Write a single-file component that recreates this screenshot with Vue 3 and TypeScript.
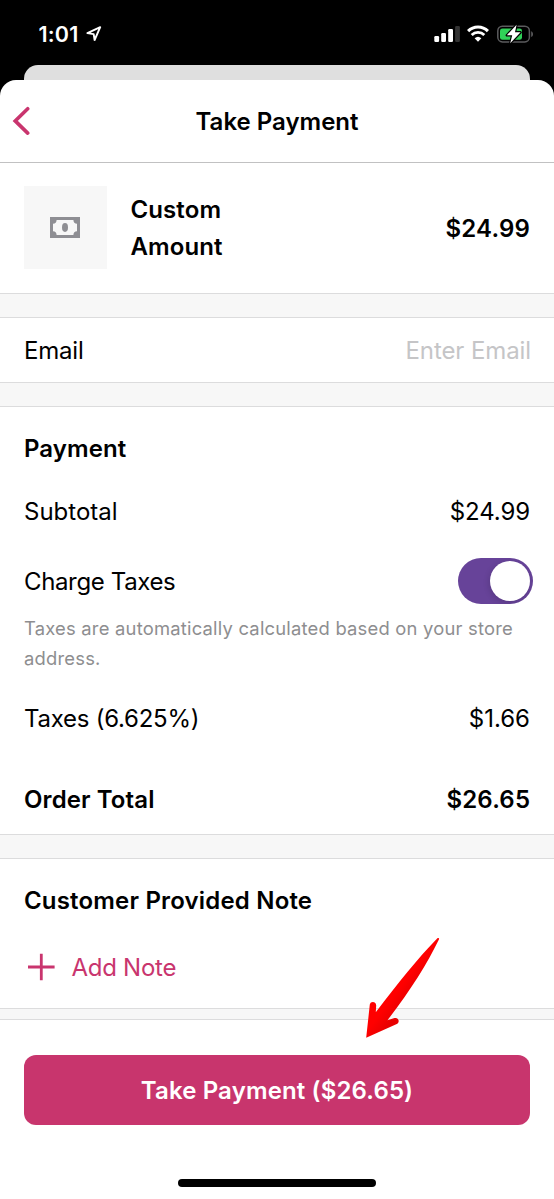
<script setup lang="ts">
import { ref } from 'vue'

const productPrice = '$24.99'
const subtotal = '$24.99'
const taxAmount = '$1.66'
const total = '$26.65'
const email = ref('')
const chargeTaxes = ref(true)
</script>

<template>
  <div class="screen">
    <div class="status">
      <div class="clock">
        <span class="time">1:01</span>
        <svg class="location" width="16" height="16" viewBox="0 0 16 16">
          <path d="M1.4 7.1 14.2 1.2 8.6 14 7.7 8.1Z" fill="none" stroke="#fff" stroke-width="1.9" stroke-linejoin="round" />
        </svg>
      </div>
      <div class="indicators">
        <svg class="signal" width="27" height="18" viewBox="0 0 27 18">
          <rect x="0.3" y="11" width="4.8" height="5.9" rx="1.2" fill="#fff" />
          <rect x="7.2" y="8" width="4.8" height="8.9" rx="1.2" fill="#fff" />
          <rect x="14.2" y="4.1" width="4.8" height="12.8" rx="1.2" fill="#fff" />
          <rect x="21.1" y="1" width="4.8" height="15.9" rx="1.2" fill="#333" />
        </svg>
        <svg class="wifi" width="22" height="17" viewBox="0 0 22 17">
          <path d="M1.1 6.1A14 14 0 0 1 20.9 6.1" fill="none" stroke="#fff" stroke-width="3.1" />
          <path d="M4.7 9.9A8.9 8.9 0 0 1 17.3 9.9" fill="none" stroke="#fff" stroke-width="2.8" />
          <path d="M11 16.7 7.6 13.3A5 5 0 0 1 14.4 13.3Z" fill="#fff" />
        </svg>
        <svg class="battery" width="37" height="20" viewBox="0 0 37 20">
          <rect x="0.8" y="2.3" width="31.6" height="15.6" rx="4.6" fill="none" stroke="#5b5b5d" stroke-width="1.5" />
          <path d="M34.2 7.2C36.6 8 36.6 12.2 34.2 13Z" fill="#5b5b5d" />
          <rect x="3" y="4.4" width="22" height="11.4" rx="2.4" fill="#30d158" />
          <path d="M19.6.8 9.8 11.3H15.2L13.2 19.2 23.6 8.3H18Z" fill="#fff" stroke="#000" stroke-width="2.4" stroke-linejoin="round" paint-order="stroke" />
        </svg>
      </div>
    </div>
    <div class="back-sheet"></div>
    <main class="sheet">
      <header class="nav">
        <button class="back" aria-label="Back">
          <svg width="18" height="30" viewBox="0 0 18 30">
            <path d="M15.7 2.7 3.2 14.9 15.7 27.1" fill="none" stroke="#c9356e" stroke-width="3.6" stroke-linecap="round" stroke-linejoin="miter" />
          </svg>
        </button>
        <h1 class="title">Take Payment</h1>
      </header>

      <section class="product">
        <div class="thumb">
          <svg width="30" height="21" viewBox="0 0 30 21">
            <rect width="30" height="21" fill="#8e8e93" />
            <path d="M6.6 3H23.4A3.8 3.8 0 0 0 27 6.7V14.3A3.8 3.8 0 0 0 23.4 18H6.6A3.8 3.8 0 0 0 3 14.3V6.7A3.8 3.8 0 0 0 6.6 3Z" fill="#f7f7f7" />
            <ellipse cx="15" cy="10.5" rx="3" ry="4.4" fill="#8e8e93" />
          </svg>
        </div>
        <h2 class="product-name">Custom<br />Amount</h2>
        <span class="value strong">{{ productPrice }}</span>
      </section>

      <div class="gap"></div>

      <section class="email">
        <label class="t-email" for="email">Email</label>
        <input id="email" v-model="email" class="field" type="text" placeholder="Enter Email" />
      </section>

      <div class="gap"></div>

      <section class="payment">
        <div class="row heading"><h2 class="t-payment">Payment</h2></div>
        <div class="row subtotal"><span>Subtotal</span><span class="value">{{ subtotal }}</span></div>
        <div class="row charge">
          <span class="t-charge">Charge Taxes</span>
          <button class="toggle" role="switch" aria-label="Charge Taxes" :aria-checked="chargeTaxes" @click="chargeTaxes = !chargeTaxes">
            <span class="knob"></span>
          </button>
        </div>
        <p class="hint">Taxes are automatically calculated based on your store address.</p>
        <div class="row taxes"><span class="t-taxes">Taxes (6.625%)</span><span class="value">{{ taxAmount }}</span></div>
        <div class="row total"><h2 class="t-total">Order Total</h2><span class="value strong">{{ total }}</span></div>
      </section>

      <div class="gap"></div>

      <section class="note">
        <h2 class="t-note">Customer Provided Note</h2>
        <button class="add">
          <svg width="28" height="28" viewBox="0 0 28 28">
            <path d="M14.3 .8V27.2M1 14H27.6" stroke="#c9356e" stroke-width="2.8" fill="none" />
          </svg>
          <span class="t-add">Add Note</span>
        </button>
      </section>

      <div class="gap thin"></div>

      <footer class="footer">
        <button class="pay">Take Payment ({{ total }})</button>
        <div class="home"></div>
      </footer>
    </main>

    <svg class="arrow" width="80" height="106" viewBox="0 0 80 106">
      <defs>
        <linearGradient id="arrowFill" gradientUnits="userSpaceOnUse" x1="28" y1="58" x2="44" y2="70">
          <stop offset="0.3" stop-color="#ff0000" />
          <stop offset="1" stop-color="#e80000" />
        </linearGradient>
      </defs>
      <path d="M77.4 3.2C78.6 2.4 79.6 3.2 78.9 4.4C67 29 50 56 27.5 85.2L34.5 83.1C38.8 82.2 40.2 87.3 36.8 89.1L6.2 102.8 9.8 69.6C10.5 66.1 15.8 66.3 16.2 70.2L15.8 77.3C38 48 58 23 77.4 3.2Z" fill="url(#arrowFill)" />
    </svg>
  </div>
</template>

<style>
html,
body {
  margin: 0;
  background: #000;
}
</style>

<style scoped>
.screen {
  position: relative;
  display: flex;
  flex-direction: column;
  width: 554px;
  height: 1199px;
  overflow: hidden;
  background: #000;
  color: #000;
  font-family: Inter, "Liberation Sans", sans-serif;
  font-size: 24px;
  line-height: 36px;
  font-weight: 400;
}
* {
  box-sizing: border-box;
}
h1,
h2,
p {
  margin: 0;
  font-size: inherit;
  font-weight: 600;
}
button,
input {
  border: 0;
  padding: 0;
  background: none;
  font: inherit;
  letter-spacing: inherit;
  color: inherit;
}
.status {
  display: flex;
  justify-content: space-between;
  height: 65px;
  padding: 0 20px 0 38.5px;
  color: #fff;
}
.clock {
  display: flex;
  align-items: flex-start;
  padding-top: 16px;
}
.time {
  font-size: 21.5px;
  font-weight: 600;
  line-height: 36px;
  letter-spacing: 0.2px;
}
.location {
  margin: 10px 0 0 7px;
}
.indicators {
  display: flex;
  align-items: flex-start;
  padding-top: 24px;
}
.signal {
  margin: 1px 6px 0 0;
}
.wifi {
  margin: 1px 8px 0 0;
}
.back-sheet {
  height: 15px;
  margin: 0 24px;
  border-radius: 14px 14px 0 0;
  background: #dfdfdf;
}
.sheet {
  flex: 1;
  display: flex;
  flex-direction: column;
  border-radius: 16px 16px 0 0;
  background: #fff;
}
.nav {
  display: grid;
  grid-template-columns: 60px 1fr 60px;
  align-items: center;
  height: 83px;
  border-bottom: 1px solid #c1c1c2;
}
.back {
  display: flex;
  margin-left: 12px;
}
.title {
  padding-top: 2px;
  text-align: center;
}
.product {
  display: flex;
  align-items: center;
  height: 130px;
  padding: 0 24px;
}
.thumb {
  display: flex;
  align-items: center;
  justify-content: center;
  width: 82.5px;
  height: 83px;
  margin: 0 24px 1px 0;
  background: #f7f7f7;
}
.product-name {
  flex: 1;
  line-height: 37px;
  letter-spacing: 0.1px;
}
.value {
  padding-top: 1px;
}
.strong {
  padding-top: 2px;
  margin-right: -0.2px;
  font-weight: 600;
  letter-spacing: 0.2px;
}
.gap {
  height: 25px;
  border: solid #dcdcdd;
  border-width: 1px 0;
  background: #f7f7f7;
}
.gap.thin {
  height: 12px;
}
.email {
  display: flex;
  align-items: center;
  justify-content: space-between;
  height: 64px;
  padding: 2px 23px 0 24px;
}
.t-email {
  letter-spacing: -0.2px;
}
.field {
  width: 300px;
  text-align: right;
  letter-spacing: -0.1px;
  outline: none;
}
.field::placeholder {
  color: #c5c5c7;
  opacity: 1;
}
.payment {
  height: 427px;
  padding: 9px 24px 0;
}
.row {
  display: flex;
  align-items: center;
  justify-content: space-between;
}
.heading {
  height: 64px;
  padding-top: 2px;
}
.t-payment {
  letter-spacing: 0.1px;
}
.subtotal {
  height: 63px;
}
.subtotal .value {
  padding-top: 0;
  letter-spacing: -0.1px;
}
.charge {
  height: 66px;
  margin-top: 5px;
}
.t-charge {
  padding-top: 2px;
  letter-spacing: -0.36px;
}
.toggle {
  display: flex;
  justify-content: flex-end;
  width: 75.5px;
  height: 46px;
  margin-right: -3.3px;
  padding: 3px;
  border-radius: 23px;
  background: #674399;
  overflow: hidden;
}
.toggle[aria-checked="false"] {
  justify-content: flex-start;
  background: #e9e9eb;
}
.knob {
  width: 40px;
  height: 40px;
  border-radius: 50%;
  background: #fff;
  box-shadow: -1px 2px 6px rgba(0, 0, 0, 0.14);
}
.hint {
  margin-right: -10px;
  font-size: 18.4px;
  font-weight: 400;
  line-height: 29.5px;
  letter-spacing: 0.21px;
  color: #8e8e90;
}
.taxes {
  height: 66px;
  margin-top: 12px;
  padding-top: 2px;
}
.taxes .value {
  padding-top: 0;
}
.t-taxes {
  letter-spacing: -0.25px;
}
.total {
  height: 66px;
  margin-top: 15px;
  padding-top: 2px;
}
.total .value {
  padding-top: 0;
}
.t-total {
  letter-spacing: 0.1px;
}
.note {
  height: 149px;
  padding: 24px 24px 0;
}
.t-note {
  height: 36px;
  letter-spacing: 0.18px;
}
.add {
  display: flex;
  align-items: center;
  height: 36px;
  margin-top: 30px;
  padding-left: 3px;
  color: #c9356e;
}
.add svg {
  margin-right: 16.5px;
}
.t-add {
  padding-top: 2px;
  letter-spacing: -0.27px;
}
.footer {
  display: flex;
  flex-direction: column;
  align-items: center;
  padding: 35px 24px 0;
}
.pay {
  width: 506px;
  height: 70px;
  padding-top: 2px;
  border-radius: 12px;
  background: #c8356d;
  color: #fff;
  font-weight: 600;
  letter-spacing: 0.14px;
}
.home {
  width: 198px;
  height: 8px;
  margin-top: 54px;
  border-radius: 4px;
  background: #000;
}
.arrow {
  position: absolute;
  left: 360px;
  top: 935px;
}
</style>
